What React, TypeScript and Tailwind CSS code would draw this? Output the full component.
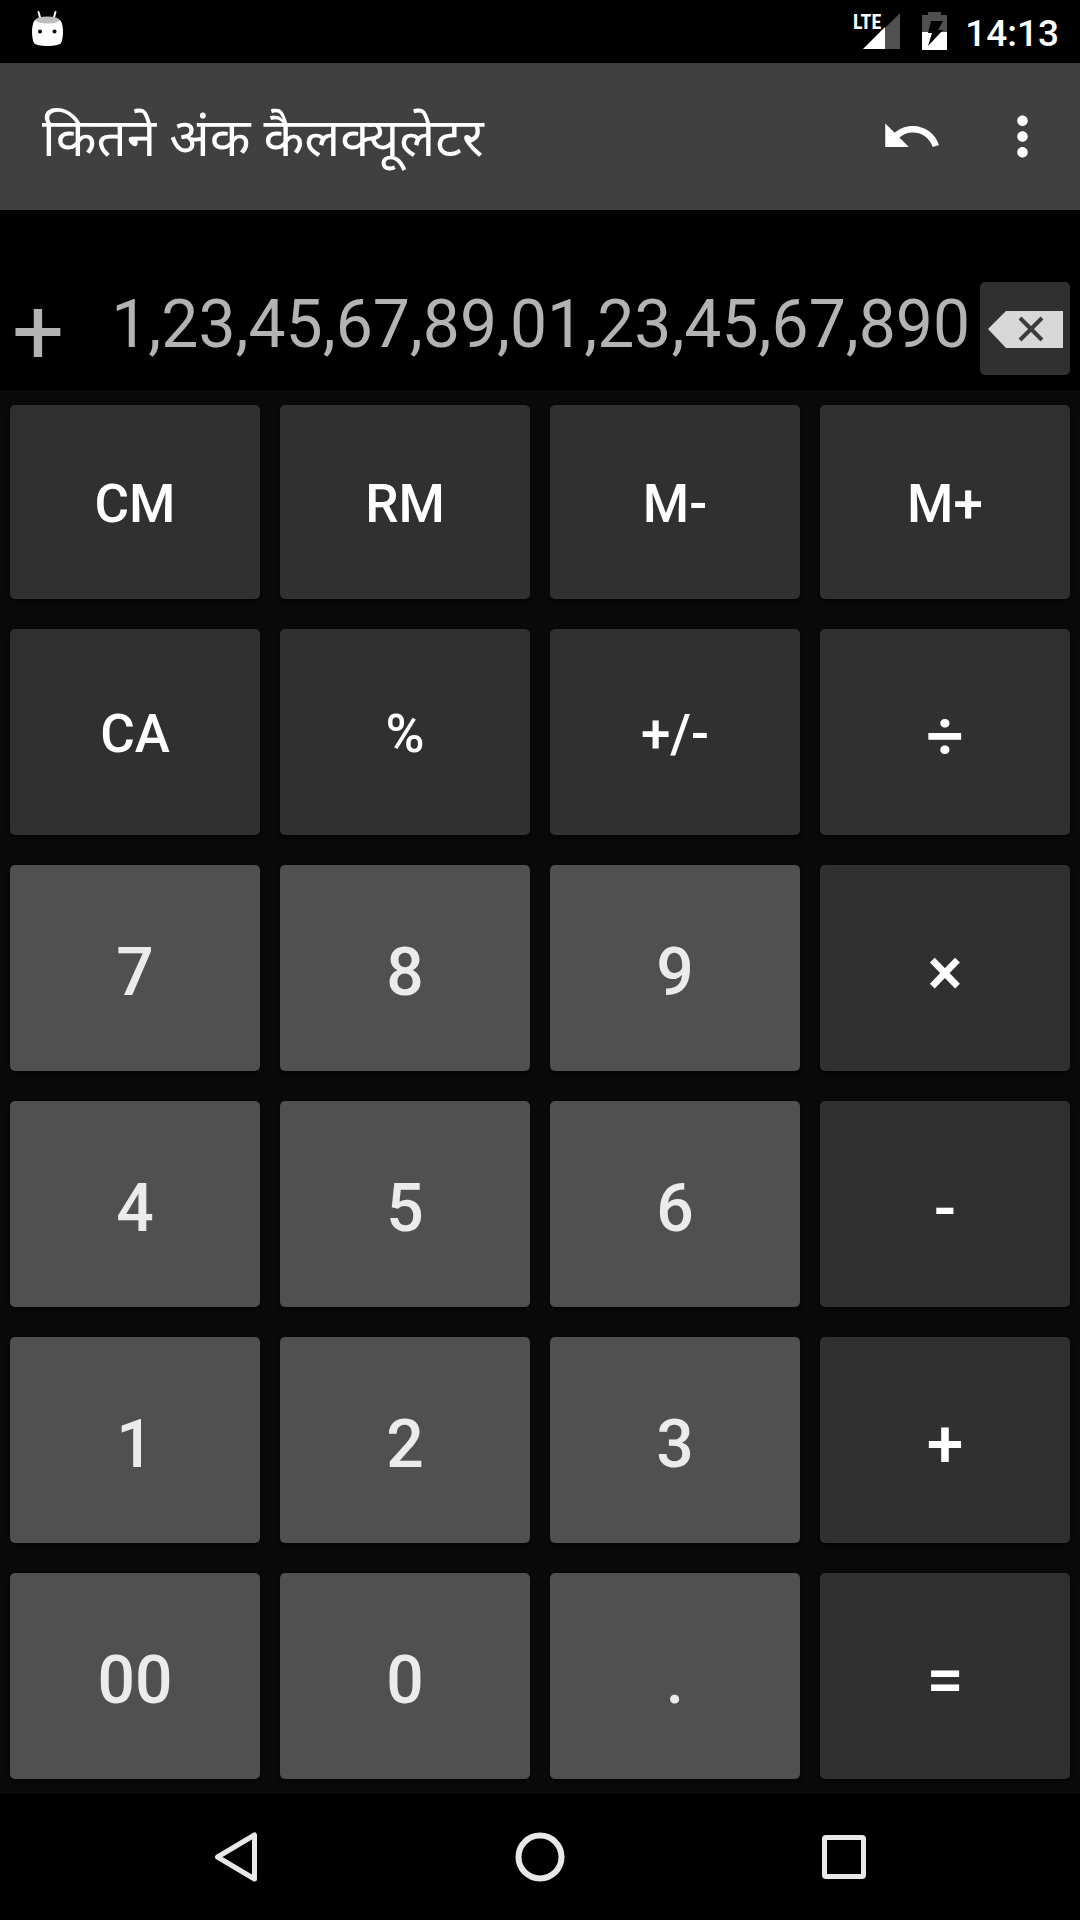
import { useState } from 'react';
import { MdMoreVert, MdUndo } from 'react-icons/md';

type KeyKind = 'memory' | 'digit' | 'operator';

interface CalcKey {
  label: string;
  kind: KeyKind;
}

const keys: CalcKey[] = [
  { label: 'CM', kind: 'memory' },
  { label: 'RM', kind: 'memory' },
  { label: 'M-', kind: 'memory' },
  { label: 'M+', kind: 'memory' },
  { label: 'CA', kind: 'memory' },
  { label: '%', kind: 'memory' },
  { label: '+/-', kind: 'memory' },
  { label: '÷', kind: 'operator' },
  { label: '7', kind: 'digit' },
  { label: '8', kind: 'digit' },
  { label: '9', kind: 'digit' },
  { label: '×', kind: 'operator' },
  { label: '4', kind: 'digit' },
  { label: '5', kind: 'digit' },
  { label: '6', kind: 'digit' },
  { label: '-', kind: 'operator' },
  { label: '1', kind: 'digit' },
  { label: '2', kind: 'digit' },
  { label: '3', kind: 'digit' },
  { label: '+', kind: 'operator' },
  { label: '00', kind: 'digit' },
  { label: '0', kind: 'digit' },
  { label: '.', kind: 'digit' },
  { label: '=', kind: 'operator' }
];

const keyStyles: Record<KeyKind, string> = {
  memory: 'bg-[#303030] text-white text-[53px] pt-1',
  digit: 'bg-[#505050] text-[#ebebeb] text-[66px] pt-[10px]',
  operator: 'bg-[#303030] text-white text-[66px] pt-[10px]'
};

// Indian grouping: last three digits, then pairs
function groupDigits(value: string) {
  const [whole, fraction] = value.split('.');
  const head = whole.slice(0, -3).replace(/\B(?=(\d{2})+(?!\d))/g, ',');
  const grouped = head ? `${head},${whole.slice(-3)}` : whole;
  return fraction === undefined ? grouped : `${grouped}.${fraction}`;
}

function StatusBar() {
  return (
    <div className="flex h-[63px] items-center justify-between bg-black pl-8 pr-[21px]">
      <svg width="32" height="63" viewBox="0 0 32 63" aria-hidden="true">
        <path d="M6.500 12l2 7M23.500 12l-2 7" stroke="#fff" strokeWidth="2" strokeLinecap="round" />
        <path d="M3 20C1 22 0 27 0 32s1 9 2 11c2 4 25 4 27 0 1-2 2-6 2-11s-1-10-3-12z" fill="#fff" />
        <ellipse cx="15.5" cy="20" rx="12" ry="3.5" fill="#bdbdbd" />
        <circle cx="8" cy="31.5" r="2" fill="#000" />
        <circle cx="22.5" cy="31.5" r="2" fill="#000" />
      </svg>
      <div className="flex items-center">
        <svg width="50" height="63" viewBox="0 0 50 63" className="mr-5" aria-hidden="true">
          <path d="M49 13v36H34V28z" fill="#505050" />
          <path d="M12 49l22-22v22z" fill="#fff" />
          <text x="2" y="29" fill="#fff" fontSize="20" fontWeight="700" fontFamily="'Roboto Condensed', 'Open Sans Condensed', Roboto, sans-serif">LTE</text>
        </svg>
        <svg width="26" height="63" viewBox="0 0 26 63" className="mr-[18px]" aria-hidden="true">
          <path d="M1 15h6v-3h13v3h6v17H1z" fill="#505050" />
          <path d="M1 32h25v18H1z" fill="#fff" />
          <path d="M10 21h12l-5 9h5L7 46l4-13H7z" fill="#000" />
        </svg>
        <span className="pt-1 text-[37px] font-medium leading-[59px] text-white">14:13</span>
      </div>
    </div>
  );
}

function AppBar() {
  return (
    <header className="flex h-[147px] items-center justify-between bg-[#404040] pl-[42px] pr-[26px] text-white">
      <h1 className="pt-[2px] text-[53px] font-normal leading-[60px]">कितने अंक कैलक्यूलेटर</h1>
      <div className="flex items-center gap-12">
        <button type="button" aria-label="Undo">
          <MdUndo size={63} />
        </button>
        <button type="button" aria-label="More options">
          <MdMoreVert size={63} />
        </button>
      </div>
    </header>
  );
}

function NavBar() {
  return (
    <nav className="flex h-[126px] items-center justify-center gap-[244px] bg-black text-[#e8e8e8]">
      <button type="button" aria-label="Back">
        <svg width="60" height="60" viewBox="0 0 60 60" fill="none" stroke="currentColor" strokeWidth="5" strokeLinejoin="round">
          <path d="M48.500 8v44L11.500 30z" />
        </svg>
      </button>
      <button type="button" aria-label="Home">
        <svg width="60" height="60" viewBox="0 0 60 60" fill="none" stroke="currentColor" strokeWidth="6">
          <circle cx="30" cy="30" r="21.5" />
        </svg>
      </button>
      <button type="button" aria-label="Recent apps">
        <svg width="60" height="60" viewBox="0 0 60 60" fill="none" stroke="currentColor" strokeWidth="5">
          <rect x="10.5" y="10.5" width="39" height="39" rx="1.5" />
        </svg>
      </button>
    </nav>
  );
}

export default function App() {
  const [value, setValue] = useState('12345678901234567890');
  const [operator, setOperator] = useState('+');

  const handleKey = ({ label, kind }: CalcKey) => {
    if (kind === 'digit') {
      setValue(prev => (prev === '0' && label !== '.' ? label : prev + label));
    } else if (kind === 'operator') {
      setOperator(label);
    } else if (label === 'CA') {
      setValue('0');
    }
  };

  return (
    <div className="flex min-h-screen flex-col bg-black font-[Roboto,'Noto_Sans',sans-serif]">
      <StatusBar />
      <AppBar />

      {/* Display */}
      <section className="flex h-[180px] items-end gap-[10px] pb-[15px] pl-3 pr-[10px]">
        <span className="text-[92px] leading-[84px] text-[#b3b3b3]">{operator}</span>
        <output className="flex-1 pb-3 text-right text-[66px] leading-[76px] text-[#b3b3b3]">
          {groupDigits(value)}
        </output>
        <button
          type="button"
          aria-label="Backspace"
          onClick={() => setValue(prev => prev.slice(0, -1) || '0')}
          className="flex h-[93px] w-[90px] items-center justify-center rounded-[5px] bg-[#303030]"
        >
          <svg width="78" height="38" viewBox="0 0 78 38">
            <path d="M2 19L20 1h57v37H20z" fill="#d8d8d8" />
            <path d="M34 8l22 22M56 8L34 30" stroke="#3c3c3c" strokeWidth="4" />
          </svg>
        </button>
      </section>

      {/* Keypad */}
      <main className="grid flex-1 grid-cols-4 grid-rows-[194fr_206fr_206fr_206fr_206fr_206fr] gap-x-5 gap-y-[30px] bg-[#0a0a0a] px-[10px] py-[15px]">
        {keys.map(key => (
          <button
            key={key.label}
            type="button"
            onClick={() => handleKey(key)}
            className={`rounded-[5px] font-medium leading-[76px] shadow-md shadow-black/40 ${keyStyles[key.kind]}`}
          >
            {key.label}
          </button>
        ))}
      </main>

      <NavBar />
    </div>
  );
}
